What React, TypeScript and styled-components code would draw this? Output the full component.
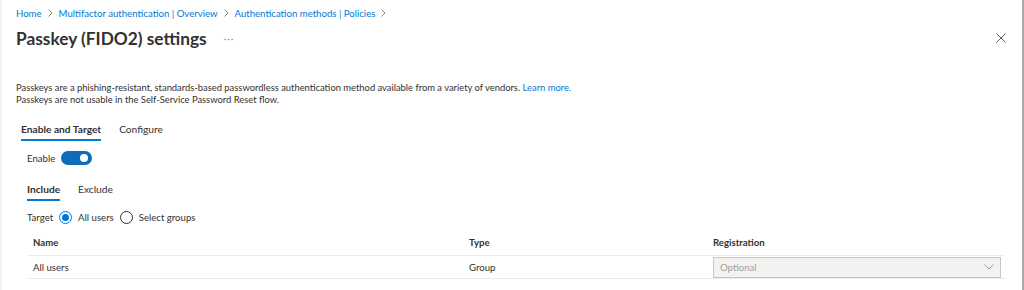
import React from 'react';
import styled, { createGlobalStyle, css } from 'styled-components';

const GlobalStyle = createGlobalStyle`
  html, body {
    margin: 0;
    padding: 0;
    background: #ffffff;
  }
  body {
    font-family: Lato, 'Open Sans', sans-serif;
    color: #323130;
  }
`;

const Blade = styled.div`
  box-sizing: border-box;
  width: 1024px;
  height: 290px;
  overflow: hidden;
  background: #ffffff;
  border-left: 2px solid #f2f2f2;
  border-right: 2px solid #a8a8a8;
  padding: 0 0 0 14px;
`;

const Breadcrumb = styled.nav`
  display: flex;
  align-items: center;
  height: 26px;
  font-size: 9.6px;
`;

const Crumb = styled.a`
  color: #0078d4;
  text-decoration: none;
`;

const CrumbSep = styled.span`
  display: inline-flex;
  margin: 0 6px;
  color: #8a8886;
`;

const TitleRow = styled.div`
  display: flex;
  align-items: center;
  height: 24px;
  padding-right: 16px;
`;

const Title = styled.h1`
  margin: 0;
  font-size: 17.3px;
  font-weight: 700;
  color: #323130;
`;

const More = styled.span`
  margin-left: 17px;
  color: #8a8886;
  font-size: 10px;
  letter-spacing: 1px;
  line-height: 1;
`;

const CloseButton = styled.button`
  margin-left: auto;
  display: flex;
  padding: 0;
  border: none;
  background: none;
  color: #605e5c;
`;

const Description = styled.p`
  margin: 32px 0 0;
  font-size: 9.4px;
  line-height: 12px;
  color: #323130;
`;

const Link = styled.a`
  color: #0078d4;
  text-decoration: none;
`;

const TabList = styled.div<{ $inset?: number; $top: number }>`
  display: flex;
  gap: 18px;
  margin-top: ${({ $top }) => $top}px;
  padding-left: ${({ $inset }) => $inset ?? 0}px;
`;

const Tab = styled.div<{ $active?: boolean }>`
  padding: 0 0 3px;
  font-size: 10.2px;
  line-height: 14px;
  color: #323130;
  border-bottom: 2px solid transparent;
  ${({ $active }) =>
    $active &&
    css`
      font-weight: 700;
      border-bottom-color: #0078d4;
    `}
`;

const Body = styled.div`
  padding-left: 11px;
`;

const FieldRow = styled.div<{ $top: number }>`
  display: flex;
  align-items: center;
  gap: 6px;
  margin-top: ${({ $top }) => $top}px;
  font-size: 9.6px;
  color: #323130;
`;

const Toggle = styled.span<{ $on?: boolean }>`
  position: relative;
  display: inline-block;
  width: 31px;
  height: 14px;
  border-radius: 7px;
  background: ${({ $on }) => ($on ? '#0f6cbd' : '#ffffff')};

  &::after {
    content: '';
    position: absolute;
    top: 3px;
    left: ${({ $on }) => ($on ? '19px' : '3px')};
    width: 8px;
    height: 8px;
    border-radius: 50%;
    background: #ffffff;
  }
`;

const Radio = styled.span<{ $checked?: boolean }>`
  position: relative;
  box-sizing: border-box;
  display: inline-block;
  width: 13px;
  height: 13px;
  border-radius: 50%;
  border: 1px solid ${({ $checked }) => ($checked ? '#0078d4' : '#323130')};

  ${({ $checked }) =>
    $checked &&
    css`
      &::after {
        content: '';
        position: absolute;
        inset: 2px;
        border-radius: 50%;
        background: #0078d4;
      }
    `}
`;

const Table = styled.div`
  margin-top: 5px;
  width: 978px;
  font-size: 9.6px;
`;

const TableRow = styled.div<{ $header?: boolean }>`
  display: grid;
  grid-template-columns: 436px 244px 298px;
  align-items: center;
  height: ${({ $header }) => ($header ? '26px' : '22px')};
  border-bottom: 1px solid #edebe9;
  ${({ $header }) =>
    $header &&
    css`
      font-weight: 700;
    `}
`;

const Cell = styled.div`
  padding-left: 6px;
`;

const Select = styled.div`
  box-sizing: border-box;
  display: flex;
  align-items: center;
  justify-content: space-between;
  width: 288px;
  height: 21px;
  padding: 0 6px;
  background: #f3f2f1;
  border: 1px solid #c8c6c4;
  color: #a19f9d;
`;

const Chevron = () => (
  <svg width="10" height="6" viewBox="0 0 10 6" fill="none">
    <path d="M0.5 0.5L5 5L9.5 0.5" stroke="#a19f9d" strokeWidth="1" />
  </svg>
);

const CrumbChevron = () => (
  <svg width="5" height="8" viewBox="0 0 5 8" fill="none">
    <path d="M0.5 0.5L4 4L0.5 7.5" stroke="#8a8886" strokeWidth="1" />
  </svg>
);

const CloseIcon = () => (
  <svg width="10" height="10" viewBox="0 0 10 10" fill="none">
    <path d="M0.5 0.5L9.5 9.5M9.5 0.5L0.5 9.5" stroke="#605e5c" strokeWidth="1" />
  </svg>
);

const crumbs = [
  'Home',
  'Multifactor authentication | Overview',
  'Authentication methods | Policies',
];

export default function App() {
  return (
    <>
      <GlobalStyle />
      <Blade>
        <Breadcrumb>
          {crumbs.map((c) => (
            <React.Fragment key={c}>
              <Crumb href="#">{c}</Crumb>
              <CrumbSep>
                <CrumbChevron />
              </CrumbSep>
            </React.Fragment>
          ))}
        </Breadcrumb>
        <TitleRow>
          <Title>Passkey (FIDO2) settings</Title>
          <More>···</More>
          <CloseButton aria-label="Close">
            <CloseIcon />
          </CloseButton>
        </TitleRow>
        <Description>
          Passkeys are a phishing-resistant, standards-based passwordless authentication
          method available from a variety of vendors. <Link href="#">Learn more.</Link>
          <br />
          Passkeys are not usable in the Self-Service Password Reset flow.
        </Description>
        <TabList $inset={5} $top={16}>
          <Tab $active>Enable and Target</Tab>
          <Tab>Configure</Tab>
        </TabList>
        <Body>
          <FieldRow $top={10}>
            Enable <Toggle $on />
          </FieldRow>
          <TabList $top={17}>
            <Tab $active>Include</Tab>
            <Tab>Exclude</Tab>
          </TabList>
          <FieldRow $top={10}>
            Target
            <Radio $checked />
            <span>All users</span>
            <Radio />
            <span>Select groups</span>
          </FieldRow>
          <Table>
            <TableRow $header>
              <Cell>Name</Cell>
              <Cell>Type</Cell>
              <Cell>Registration</Cell>
            </TableRow>
            <TableRow>
              <Cell>All users</Cell>
              <Cell>Group</Cell>
              <Cell>
                <Select>
                  Optional
                  <Chevron />
                </Select>
              </Cell>
            </TableRow>
          </Table>
        </Body>
      </Blade>
    </>
  );
}
